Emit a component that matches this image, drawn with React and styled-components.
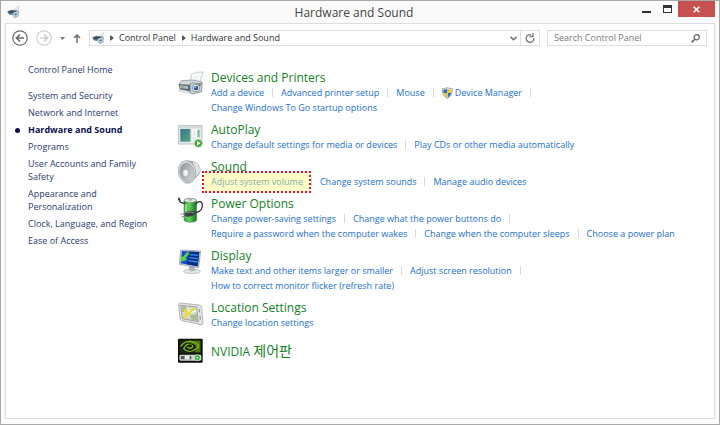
import React from "react";
import styled, { createGlobalStyle, css } from "styled-components";

const Global = createGlobalStyle`
  * { box-sizing: border-box; }
  html, body, #root { height: 100%; }
  body {
    margin: 0;
    font-family: "Open Sans", "Noto Sans CJK KR", sans-serif;
    font-size: 9px;
    color: #333;
  }
  button, input { font: inherit; color: inherit; }
  button { padding: 0; border: 0; background: none; }
  a { text-decoration: none; color: inherit; }
  svg { display: block; flex: none; }
`;

const Window = styled.div`
  min-height: 100vh;
  display: flex;
  flex-direction: column;
  padding: 0 4px 5px;
  background: #fafafa;
  border: 1px solid #a9a9a9;
`;

const TitleBar = styled.header`
  display: grid;
  grid-template-columns: 1fr auto 1fr;
  align-items: start;
  height: 22px;
`;

const TitleIcon = styled.div`
  padding: 5px 0 0 2px;
`;

const Title = styled.h1`
  margin: 0;
  padding-right: 12px;
  font-size: 12px;
  line-height: 23px;
  font-weight: 400;
  color: #444;
`;

const Controls = styled.div`
  display: flex;
  justify-content: flex-end;
`;

const ControlButton = styled.button`
  width: ${(p) => (p.$close ? 37 : 21)}px;
  height: 16px;
  display: grid;
  place-items: center;
  background: ${(p) => (p.$close ? "#c75050" : "transparent")};
`;

const Frame = styled.div`
  flex: 1;
  border: 1px solid #dedede;
  background: #fff;
`;

const Toolbar = styled.nav`
  display: flex;
  align-items: center;
  height: 28px;
  padding: 0 7px 0 6px;
`;

const NavButton = styled.button`
  width: ${(p) => p.$w}px;
  height: 18px;
  display: grid;
  place-items: center;
`;

const AddressBar = styled.div`
  flex: 1;
  display: flex;
  align-items: center;
  height: 16px;
  border: 1px solid #dedede;
  line-height: 14px;
`;

const Crumbs = styled.div`
  flex: 1;
  display: flex;
  align-items: center;
  gap: 5px;
  padding-left: 2px;
`;

const Crumb = styled.a`
  padding-right: 1px;
  color: #333;
  white-space: nowrap;
`;

const BarButton = styled.button`
  width: ${(p) => (p.$divided ? 19 : 14)}px;
  height: 14px;
  display: grid;
  place-items: center;
  ${(p) => p.$divided && css`border-left: 1px solid #dedede;`}
`;

const Search = styled.label`
  display: flex;
  align-items: center;
  width: 160px;
  height: 16px;
  margin-left: 7px;
  padding: 0 6px;
  border: 1px solid #dedede;
`;

const SearchInput = styled.input`
  flex: 1;
  min-width: 0;
  padding: 0;
  border: 0;
  outline: 0;
  background: none;
  line-height: 14px;
  &::placeholder { color: #7a7a7a; opacity: 1; }
`;

const Body = styled.div`
  display: flex;
  padding-top: 11px;
`;

const Sidebar = styled.aside`
  width: 172px;
  flex: none;
  padding: 0 22px;
  line-height: 13px;
  color: #2b3a72;
`;

const SideHome = styled.a`
  display: block;
  margin-bottom: 13px;
`;

const SideList = styled.ul`
  margin: 0;
  padding: 0;
  list-style: none;
  display: flex;
  flex-direction: column;
  gap: 4px;
`;

const SideItem = styled.li`
  position: relative;
  ${(p) => p.$current && css`
    font-weight: 700;
    color: #0b1150;
    &::before {
      content: "";
      position: absolute;
      left: -13px;
      top: 5px;
      width: 5px;
      height: 5px;
      border-radius: 50%;
      background: #0b1150;
    }
  `}
`;

const Main = styled.main`
  flex: 1;
  display: flex;
  flex-direction: column;
  gap: 8px;
  padding-top: 8px;
`;

const Category = styled.section`
  display: flex;
  align-items: flex-start;
  gap: 7px;
`;

const IconSlot = styled.div`
  width: 26px;
  height: 26px;
`;

const Heading = styled.h2`
  margin: 0;
  font-size: 12px;
  line-height: ${(p) => (p.$alone ? 26 : 14)}px;
  font-weight: 400;
  color: #14811f;
`;

const Hangul = styled.span`
  font-size: 14px;
`;

const LinkRow = styled.div`
  display: flex;
  height: 15px;
  line-height: 15px;
  white-space: nowrap;
  color: #1a6fcf;
`;

const Task = styled.span`
  position: relative;
  display: flex;
  align-items: center;
  gap: 2px;
`;

const Divider = styled.span`
  width: 1px;
  height: 9px;
  margin: 3px 8px;
  background: #d9d9d9;
`;

const Highlight = styled.span`
  position: absolute;
  inset: -3px -8px -4px -9px;
  border: 2px dotted #d3134f;
  background: rgba(250, 248, 130, 0.45);
  pointer-events: none;
`;

const DeviceGlyph = ({ size }) => (
  <svg width={size} height={size} viewBox="0 0 39 39" aria-hidden="true">
    <path d="M22 10 31 2l6-1-6 14z" fill="#e8eaec" stroke="#b9bfc4" />
    <path d="M1 16 12 11l20 2 4 4-3 14-9 5-6-8-11-2-5-5z" fill="#8c9aa4" />
    <path d="M2 17 14 13l15 2-8 7-14 1z" fill="#3f5261" />
    <path d="M18 20 35 14v16l-11 7-6-7z" fill="#a7bccb" />
    <circle cx="26" cy="25" r="6" fill="#dbe6ee" />
    <circle cx="26" cy="25" r="3.5" fill="#3a7bb0" />
  </svg>
);

const icons = {
  devices: (
    <>
      <path d="M40 10 56 4 75 3 65 36 38 32z" fill="#fdfdfd" stroke="#aeb2b6" strokeWidth="2" />
      <path d="M48 14 68 10M46 20l19-3M45 26l17-2" stroke="#dfe3e6" strokeWidth="2" />
      <path d="M2 40 10 29 44 27 72 33 72 40 40 44z" fill="#d5d9dc" stroke="#81878d" strokeWidth="2" />
      <path d="M2 40 40 42 40 64 6 57z" fill="#5a646d" />
      <path d="M6 43 30 45 30 54 7 51z" fill="#9ec6e4" />
      <path d="M10 45 20 46 18 51 9 50z" fill="#c99b52" />
      <path d="M4 55 36 61 34 67 2 60z" fill="#e7e9ea" stroke="#9aa0a5" />
      <path d="M36 39 44 35 50 38 72 37 71 62 43 69 36 64z" fill="#c9ced2" stroke="#6b7278" strokeWidth="2" />
      <circle cx="54" cy="51" r="11" fill="#f3f6f8" stroke="#69727a" strokeWidth="2" />
      <circle cx="54" cy="51" r="7" fill="#27548d" />
      <circle cx="52" cy="49" r="3" fill="#8cc7ee" />
      <path d="M61 40h7v4h-7z" fill="#4f575e" />
    </>
  ),
  autoplay: (
    <>
      <path d="M1 8h71v55H1z" fill="#eceff1" stroke="#9ba1a7" strokeWidth="2" />
      <path d="M2 9h69v6H2z" fill="#d2d8dc" />
      <path d="M7 18h30v38H7z" fill="url(#play)" stroke="#7a9b93" />
      <path d="M42 18h24v26H42z" fill="#fff" stroke="#c3c8cc" />
      <path d="M46 22h7v18h-7z" fill="#e3e7ea" />
      <path d="M58 20h7v22h-7z" fill="#75bf95" />
      <circle cx="61" cy="61" r="12" fill="#37a52e" stroke="#d7ecd3" strokeWidth="2" />
      <path d="M57 54v14l11-7z" fill="#fff" />
      <defs>
        <linearGradient id="play" x1="0" y1="0" x2="1" y2="1">
          <stop offset="0" stopColor="#3e6f91" />
          <stop offset="1" stopColor="#4cae79" />
        </linearGradient>
      </defs>
    </>
  ),
  sound: (
    <>
      <path d="M24 2C48-2 68 12 68 31c0 9-6 15-12 20L36 70 20 70z" fill="#a6aaad" />
      <path d="M44 5c15 3 22 14 22 25 0 8-6 14-12 19z" fill="#dfe2e3" />
      <ellipse cx="27" cy="36" rx="26" ry="34" fill="#dcdfe0" stroke="#9a9ea1" strokeWidth="2" transform="rotate(-12 27 36)" />
      <ellipse cx="27" cy="37" rx="21" ry="28" fill="url(#cone)" stroke="#9ea3a6" strokeWidth="2" transform="rotate(-12 27 37)" />
      <ellipse cx="23" cy="39" rx="9" ry="11" fill="#eef1f2" stroke="#9aa1a4" strokeWidth="2" />
      <defs>
        <linearGradient id="cone" x1="0" y1="0" x2="1" y2="1">
          <stop offset="0" stopColor="#8a8f92" />
          <stop offset="1" stopColor="#d9dcdd" />
        </linearGradient>
      </defs>
    </>
  ),
  power: (
    <>
      <path d="M18 11c0-9 38-9 38 0v58c0 9-38 9-38 0z" fill="url(#battery)" stroke="#6b8d6d" strokeWidth="2" />
      <ellipse cx="37" cy="10" rx="18" ry="6" fill="#e8eeea" stroke="#8b958d" strokeWidth="2" />
      <ellipse cx="37" cy="8" rx="7" ry="3" fill="#aab1ac" />
      <path d="M24 20v43" stroke="#bdf3bb" strokeWidth="5" opacity=".8" />
      <path d="M0 4 8 16l14 4M3 2l4 14" fill="none" stroke="#303437" strokeWidth="4" />
      <path d="M54 20c12-12 22-4 18 12-3 12-12 15-24 16" fill="none" stroke="#34383a" strokeWidth="4" />
      <path d="M18 52C24 40 44 38 56 46L44 57 22 60z" fill="#3b3f41" />
      <path d="M26 48q12-6 22-1" fill="none" stroke="#8b9092" strokeWidth="3" />
      <path d="M7 52 22 50M10 60l15-3" stroke="#8a8d8f" strokeWidth="3" />
      <defs>
        <linearGradient id="battery">
          <stop offset="0" stopColor="#289b33" />
          <stop offset=".4" stopColor="#62d25e" />
          <stop offset="1" stopColor="#107021" />
        </linearGradient>
      </defs>
    </>
  ),
  display: (
    <>
      <ellipse cx="42" cy="67" rx="25" ry="7" fill="#e3e5e7" stroke="#aeb3b7" strokeWidth="2" />
      <path d="M32 52 49 50 52 66 35 67z" fill="#aeb3b7" />
      <path d="M8 3 68 6 62 56 4 46z" fill="#c7cbce" stroke="#8c9297" strokeWidth="2" />
      <path d="M12 6 64 9 59 52 8 43z" fill="#164ac8" />
      <path d="M35 8 64 9 59 52 26 46z" fill="#0a2c83" />
      <path d="M36 17 61 19M34 26l26 3M31 35l28 4" stroke="#3c91ee" strokeWidth="4" />
      <path d="M35 11 22 29l7 3-20 6 1-19 5 5L26 10z" fill="#55d43d" />
    </>
  ),
  location: (
    <>
      <path d="M8 6 64 12q6 1 7 7l4 46q0 6-6 6L12 59q-5-1-6-7L2 12q0-6 6-6z" fill="#e3e5e6" stroke="#94999c" strokeWidth="2" />
      <path d="M8 13 56 18 61 62 13 53z" fill="#d5dcca" stroke="#7d8285" strokeWidth="2" />
      <path d="M11 16 24 17 26 31 12 33zM36 42l21-3 2 20-18-3z" fill="#a9ba98" />
      <path d="M16 50 32 38 47 21M32 38 18 26" fill="none" stroke="#ece02d" strokeWidth="7" />
      <path d="M28 19l6 14M40 34l16-4" stroke="#fff" strokeWidth="3" />
      <path d="M63 24l2 10M66 44l1 12" stroke="#8b9193" strokeWidth="3" />
    </>
  ),
  nvidia: (
    <>
      <rect x="0" y="2" width="74" height="72" rx="3" fill="#090a09" />
      <path d="M4 5h66v42H4z" fill="#1b2415" />
      <path d="M8 25C21 7 45 4 62 23 54 39 30 46 17 32L25 21c14-8 25 1 16 8-6 4-12 1-12-3" fill="none" stroke="#7dbb16" strokeWidth="4" />
      <path d="M31 8h36v35H49c14-12 5-27-18-28z" fill="#76b900" opacity=".55" />
      <path d="M32 17c14 0 23 9 13 17-9 6-20 2-22-6" fill="none" stroke="#11150d" strokeWidth="3" />
      <rect x="4" y="50" width="66" height="18" rx="4" fill="#d2d5d4" />
      <rect x="8" y="54" width="32" height="10" rx="2" fill="#555a59" />
      <rect x="20" y="54" width="15" height="10" fill="#eef0ef" />
      <circle cx="58" cy="59" r="9" fill="#35ae36" stroke="#e7f2e4" strokeWidth="2" />
      <circle cx="58" cy="59" r="3" fill="#e9fbe6" />
    </>
  ),
};

const Shield = () => (
  <svg width="11" height="12" viewBox="0 0 33 36" aria-hidden="true">
    <path d="M16 1c5 3 10 4 15 4 0 15-4 24-15 30C5 29 1 20 1 5c6 0 11-1 15-4z" fill="#e9edf1" stroke="#80858a" strokeWidth="2" />
    <path d="M16 5v13H4C4 14 4 11 4 8c5 0 9-1 12-3zM17 18h11c-2 6-5 10-11 14z" fill="#2c70bd" />
    <path d="M17 5c4 2 7 3 11 3v10H17zM4 18h12v14C10 28 6 24 4 18z" fill="#f3c62c" />
  </svg>
);

const categories = [
  { icon: "devices", name: "Devices and Printers", rows: [
    [{ t: "Add a device" }, { t: "Advanced printer setup" }, { t: "Mouse" }, { t: "Device Manager", shield: true }],
    [{ t: "Change Windows To Go startup options" }],
  ] },
  { icon: "autoplay", name: "AutoPlay", rows: [
    [{ t: "Change default settings for media or devices" }, { t: "Play CDs or other media automatically" }],
  ] },
  { icon: "sound", name: "Sound", rows: [
    [{ t: "Adjust system volume", marked: true }, { t: "Change system sounds" }, { t: "Manage audio devices" }],
  ] },
  { icon: "power", name: "Power Options", rows: [
    [{ t: "Change power-saving settings" }, { t: "Change what the power buttons do" }],
    [{ t: "Require a password when the computer wakes" }, { t: "Change when the computer sleeps" }, { t: "Choose a power plan" }],
  ] },
  { icon: "display", name: "Display", rows: [
    [{ t: "Make text and other items larger or smaller" }, { t: "Adjust screen resolution" }],
    [{ t: "How to correct monitor flicker (refresh rate)" }],
  ] },
  { icon: "location", name: "Location Settings", rows: [[{ t: "Change location settings" }]] },
  { icon: "nvidia", name: "NVIDIA ", hangul: "제어판", rows: [] },
];

const sideLinks = [
  "System and Security",
  "Network and Internet",
  "Hardware and Sound",
  "Programs",
  "User Accounts and Family Safety",
  "Appearance and Personalization",
  "Clock, Language, and Region",
  "Ease of Access",
];

const Arrow = ({ left, color }) => (
  <svg width="16" height="16" viewBox="0 0 16 16" fill="none" stroke={color} aria-hidden="true">
    <circle cx="8" cy="8" r="7.2" strokeWidth="1.2" />
    <path d={left ? "M12 8H4.5M8 4.5 4.5 8 8 11.5" : "M4 8h7.5M8 4.5 11.5 8 8 11.5"} strokeWidth="1.7" />
  </svg>
);

const CrumbArrow = () => (
  <svg width="4" height="6" viewBox="0 0 4 6" aria-hidden="true">
    <path d="M0 0v6l4-3z" fill="#555" />
  </svg>
);

export default function App() {
  return (
    <>
      <Global />
      <Window>
        <TitleBar>
          <TitleIcon><DeviceGlyph size={13} /></TitleIcon>
          <Title>Hardware and Sound</Title>
          <Controls>
            <ControlButton aria-label="Minimize">
              <svg width="9" height="8"><path d="M0 6h9v2H0z" fill="#333" /></svg>
            </ControlButton>
            <ControlButton aria-label="Maximize">
              <svg width="9" height="8"><path d="M0 0h9v8H0zM1 3v4h7V3z" fill="#333" fillRule="evenodd" /></svg>
            </ControlButton>
            <ControlButton $close aria-label="Close">
              <svg width="7" height="7" viewBox="0 0 7 7"><path d="m.7.7 5.6 5.6m0-5.6L.7 6.3" stroke="#fff" strokeWidth="1.6" /></svg>
            </ControlButton>
          </Controls>
        </TitleBar>
        <Frame>
          <Toolbar aria-label="Navigation">
            <NavButton $w={16} aria-label="Back"><Arrow left color="#6a6a6a" /></NavButton>
            <NavButton $w={32} aria-label="Forward"><Arrow color="#cfcfcf" /></NavButton>
            <NavButton $w={5} aria-label="Recent locations">
              <svg width="5" height="3" viewBox="0 0 5 3"><path d="M0 0h5L2.5 3z" fill="#777" /></svg>
            </NavButton>
            <NavButton $w={24} aria-label="Up">
              <svg width="8" height="9" viewBox="0 0 8 9" fill="none" stroke="#666" strokeWidth="1.4"><path d="M4 9V1M1 4l3-3 3 3" /></svg>
            </NavButton>
            <AddressBar>
              <Crumbs>
                <DeviceGlyph size={13} />
                <CrumbArrow />
                <Crumb href="#control-panel">Control Panel</Crumb>
                <CrumbArrow />
                <Crumb href="#hardware">Hardware and Sound</Crumb>
              </Crumbs>
              <BarButton aria-label="Show addresses">
                <svg width="7" height="5" viewBox="0 0 7 5" fill="none" stroke="#666" strokeWidth="1.4"><path d="m.5.7 3 3 3-3" /></svg>
              </BarButton>
              <BarButton $divided aria-label="Refresh">
                <svg width="10" height="10" viewBox="0 0 10 10" fill="none" stroke="#777" strokeWidth="1.3"><path d="M8.9 5A3.9 3.9 0 1 1 6 1.7" /><path d="M8 0v3.5H4.5" /></svg>
              </BarButton>
            </AddressBar>
            <Search>
              <SearchInput type="search" aria-label="Search Control Panel" placeholder="Search Control Panel" />
              <svg width="9" height="9" viewBox="0 0 9 9" fill="none" stroke="#666"><circle cx="5.7" cy="3.3" r="2.6" strokeWidth="1.2" /><path d="M3.8 5.2.6 8.4" strokeWidth="1.6" /></svg>
            </Search>
          </Toolbar>
          <Body>
            <Sidebar>
              <SideHome href="#home">Control Panel Home</SideHome>
              <SideList>
                {sideLinks.map((s) => (
                  <SideItem key={s} $current={s === "Hardware and Sound"}><a href="#category">{s}</a></SideItem>
                ))}
              </SideList>
            </Sidebar>
            <Main>
              {categories.map((c) => (
                <Category key={c.name}>
                  <IconSlot>
                    <svg width="26" height="26" viewBox="0 0 78 78" aria-hidden="true">{icons[c.icon]}</svg>
                  </IconSlot>
                  <div>
                    <Heading $alone={!c.rows.length}>
                      <a href="#category">{c.name}{c.hangul && <Hangul lang="ko">{c.hangul}</Hangul>}</a>
                    </Heading>
                    {c.rows.map((row, r) => (
                      <LinkRow key={r}>
                        {row.map((x, i) => (
                          <React.Fragment key={x.t}>
                            <Task>
                              {x.shield && <Shield />}
                              <a href="#task">{x.t}</a>
                              {x.marked && <Highlight />}
                            </Task>
                            {(i < row.length - 1 || r < c.rows.length - 1) && <Divider />}
                          </React.Fragment>
                        ))}
                      </LinkRow>
                    ))}
                  </div>
                </Category>
              ))}
            </Main>
          </Body>
        </Frame>
      </Window>
    </>
  );
}
